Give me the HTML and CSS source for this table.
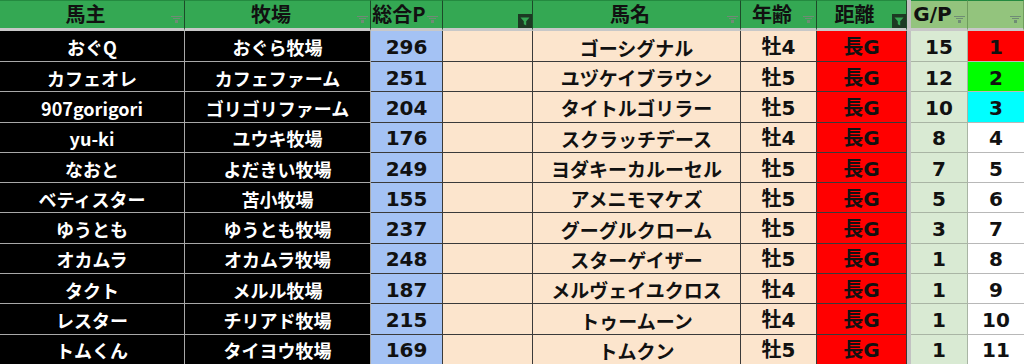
FILE: index.html
```html
<!DOCTYPE html>
<html lang="ja">
<head>
<meta charset="utf-8">
<title>馬主一覧</title>
<link rel="stylesheet" href="styles.css">
</head>
<body>
<div class="sheet">
  <div class="h"><span class="lbl">馬主</span><svg class="fb" viewBox="0 0 11 8"><path d="M0 0.5H11M2 2.5H9" stroke="#6f8c75"/><rect x="4" y="4" width="3" height="3" fill="#6f8c75"/></svg></div>
  <div class="h"><span class="lbl">牧場</span><svg class="fb" viewBox="0 0 11 8"><path d="M0 0.5H11M2 2.5H9" stroke="#6f8c75"/><rect x="4" y="4" width="3" height="3" fill="#6f8c75"/></svg></div>
  <div class="h"><span class="lbl">総合P</span><svg class="fb fb-tight" viewBox="0 0 11 8"><path d="M0 0.5H11M2 2.5H9" stroke="#6f8c75"/><rect x="4" y="4" width="3" height="3" fill="#6f8c75"/></svg></div>
  <div class="h"><span class="lbl"></span><svg class="fa" viewBox="0 0 14 14"><rect width="14" height="14" fill="#1c3a23"/><path d="M2.5 3.5H11.5L8.2 7.2V11.5L5.8 10.3V7.2Z" fill="#35a854"/></svg></div>
  <div class="h"><span class="lbl">馬名</span><svg class="fb" viewBox="0 0 11 8"><path d="M0 0.5H11M2 2.5H9" stroke="#6f8c75"/><rect x="4" y="4" width="3" height="3" fill="#6f8c75"/></svg></div>
  <div class="h"><span class="lbl">年齢</span><svg class="fb" viewBox="0 0 11 8"><path d="M0 0.5H11M2 2.5H9" stroke="#6f8c75"/><rect x="4" y="4" width="3" height="3" fill="#6f8c75"/></svg></div>
  <div class="h"><span class="lbl">距離</span><svg class="fa" viewBox="0 0 14 14"><rect width="14" height="14" fill="#1c3a23"/><path d="M2.5 3.5H11.5L8.2 7.2V11.5L5.8 10.3V7.2Z" fill="#35a854"/></svg></div>
  <div class="gap gap-h"></div>
  <div class="h h-light"><span class="lbl num">G/P</span><svg class="fb" viewBox="0 0 11 8"><path d="M0 0.5H11M2 2.5H9" stroke="#6f8c75"/><rect x="4" y="4" width="3" height="3" fill="#6f8c75"/></svg></div>
  <div class="h h-light"><span class="lbl"></span><svg class="fb" viewBox="0 0 11 8"><path d="M0 0.5H11M2 2.5H9" stroke="#6f8c75"/><rect x="4" y="4" width="3" height="3" fill="#6f8c75"/></svg></div>

  <div class="c own">おぐQ</div><div class="c own">おぐら牧場</div><div class="c blue num">296</div><div class="c peach"></div><div class="c peach name">ゴーシグナル</div><div class="c peach num">牡4</div><div class="c red num">長G</div><div class="gap"></div><div class="c lg num">15</div><div class="c rank r1 num">1</div>
  <div class="c own">カフェオレ</div><div class="c own">カフェファーム</div><div class="c blue num">251</div><div class="c peach"></div><div class="c peach name">ユヅケイブラウン</div><div class="c peach num">牡5</div><div class="c red num">長G</div><div class="gap"></div><div class="c lg num">12</div><div class="c rank r2 num">2</div>
  <div class="c own">907gorigori</div><div class="c own">ゴリゴリファーム</div><div class="c blue num">204</div><div class="c peach"></div><div class="c peach name">タイトルゴリラー</div><div class="c peach num">牡5</div><div class="c red num">長G</div><div class="gap"></div><div class="c lg num">10</div><div class="c rank r3 num">3</div>
  <div class="c own">yu-ki</div><div class="c own">ユウキ牧場</div><div class="c blue num">176</div><div class="c peach"></div><div class="c peach name">スクラッチデース</div><div class="c peach num">牡4</div><div class="c red num">長G</div><div class="gap"></div><div class="c lg num">8</div><div class="c rank num">4</div>
  <div class="c own">なおと</div><div class="c own">よだきい牧場</div><div class="c blue num">249</div><div class="c peach"></div><div class="c peach name">ヨダキーカルーセル</div><div class="c peach num">牡5</div><div class="c red num">長G</div><div class="gap"></div><div class="c lg num">7</div><div class="c rank num">5</div>
  <div class="c own">ベティスター</div><div class="c own">苫小牧場</div><div class="c blue num">155</div><div class="c peach"></div><div class="c peach name">アメニモマケズ</div><div class="c peach num">牡5</div><div class="c red num">長G</div><div class="gap"></div><div class="c lg num">5</div><div class="c rank num">6</div>
  <div class="c own">ゆうとも</div><div class="c own">ゆうとも牧場</div><div class="c blue num">237</div><div class="c peach"></div><div class="c peach name">グーグルクローム</div><div class="c peach num">牡5</div><div class="c red num">長G</div><div class="gap"></div><div class="c lg num">3</div><div class="c rank num">7</div>
  <div class="c own">オカムラ</div><div class="c own">オカムラ牧場</div><div class="c blue num">248</div><div class="c peach"></div><div class="c peach name">スターゲイザー</div><div class="c peach num">牡5</div><div class="c red num">長G</div><div class="gap"></div><div class="c lg num">1</div><div class="c rank num">8</div>
  <div class="c own">タクト</div><div class="c own">メルル牧場</div><div class="c blue num">187</div><div class="c peach"></div><div class="c peach name">メルヴェイユクロス</div><div class="c peach num">牡4</div><div class="c red num">長G</div><div class="gap"></div><div class="c lg num">1</div><div class="c rank num">9</div>
  <div class="c own">レスター</div><div class="c own">チリアド牧場</div><div class="c blue num">215</div><div class="c peach"></div><div class="c peach name">トゥームーン</div><div class="c peach num">牡4</div><div class="c red num">長G</div><div class="gap"></div><div class="c lg num">1</div><div class="c rank num">10</div>
  <div class="c own">トムくん</div><div class="c own">タイヨウ牧場</div><div class="c blue num">169</div><div class="c peach"></div><div class="c peach name">トムクン</div><div class="c peach num">牡5</div><div class="c red num">長G</div><div class="gap"></div><div class="c lg num">1</div><div class="c rank num">11</div>
</div>
</body>
</html>
```

FILE: styles.css
```css
html, body {
  margin: 0;
  padding: 0;
  overflow: hidden;
  background: #ffffff;
}

.sheet {
  display: grid;
  grid-template-columns: 185px 186px 72px 90px 208px 76px 90px 4px 57px 56px;
  grid-template-rows: 31px 31px repeat(10, 30.3px);
  width: 1024px;
  font-family: "Noto Sans CJK JP", "Noto Sans", sans-serif;
  font-weight: 700;
}

.h {
  box-sizing: border-box;
  display: flex;
  align-items: center;
  background: #34a853;
  border-top: 1px solid #248a40;
  border-right: 1px solid #1d4a29;
  border-bottom: 3px solid #c8c8c8;
  font-size: 20px;
  color: #111111;
  line-height: 1;
}

.h-light {
  background: #93c47d;
  border-right-color: #6e9c5c;
}

.lbl {
  flex: 1;
  text-align: center;
  white-space: nowrap;
  padding-bottom: 1px;
}

.fb {
  flex: none;
  width: 11px;
  height: 8px;
  align-self: flex-end;
  margin: 0 2px 4px 0;
}

.fb-tight {
  margin-right: 4px;
}

.fa {
  flex: none;
  width: 14px;
  height: 14px;
  align-self: flex-end;
}

.gap {
  background: #c2c2c2;
}

.gap-h {
  border-bottom: 3px solid #c8c8c8;
  box-sizing: border-box;
}

.c {
  box-sizing: border-box;
  display: flex;
  align-items: center;
  justify-content: center;
  font-size: 18px;
  line-height: 1;
  color: #111111;
  white-space: nowrap;
  border-right: 1px solid #3a3a3a;
  border-bottom: 1px solid #3a3a3a;
  padding-top: 2px;
}

.num {
  font-family: "DejaVu Sans", "Noto Sans CJK JP", sans-serif;
  font-size: 20px;
}

.name {
  font-size: 19px;
}

.own {
  background: #000000;
  color: #ffffff;
  border-color: #a8a8a8;
}

.blue {
  background: #a4c2f4;
}

.peach {
  background: #fce5cd;
}

.red {
  background: #ff0000;
}

.lg {
  background: #d9ead3;
  border-color: #a9b5a4;
}

.rank {
  background: #ffffff;
  border-color: #b8b8b8;
  border-right: none;
}

.r1 {
  background: #ff0000;
}

.r2 {
  background: #00ff00;
}

.r3 {
  background: #00ffff;
}
```
